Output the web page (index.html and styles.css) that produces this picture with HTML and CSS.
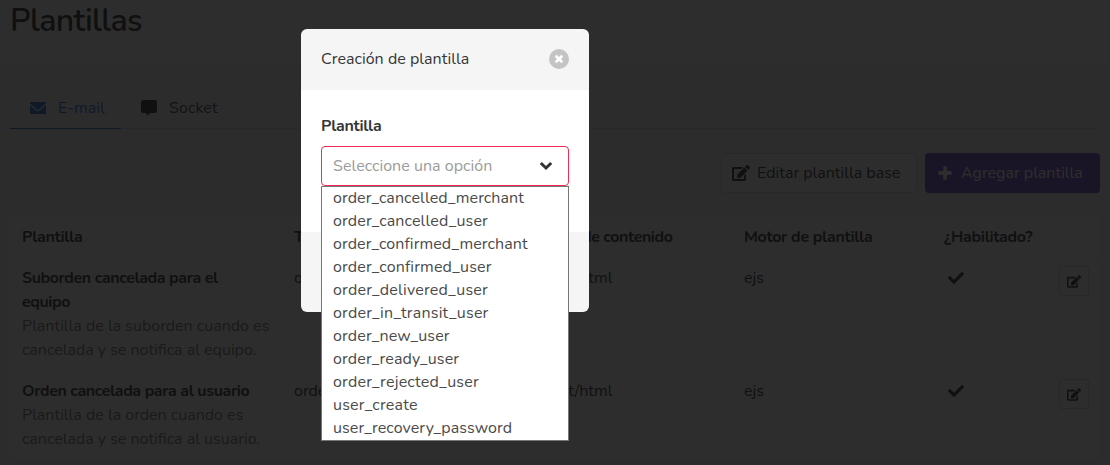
FILE: index.html
```html
<!DOCTYPE html>
<html lang="es">
<head>
<meta charset="utf-8">
<title>Plantillas</title>
<link rel="stylesheet" href="styles.css">
</head>
<body>
<svg class="sprite" aria-hidden="true">
  <symbol id="edit" viewBox="0 0 576 512"><path fill="currentColor" d="M402.6 83.2l90.2 90.2c3.8 3.8 3.8 10 0 13.8L274.4 405.6l-92.8 10.3c-12.4 1.4-22.9-9.1-21.5-21.5l10.3-92.8L388.8 83.2c3.8-3.8 10-3.8 13.8 0zm162-22.9l-48.8-48.8c-15.2-15.2-39.9-15.2-55.2 0l-35.4 35.4c-3.8 3.8-3.8 10 0 13.8l90.2 90.2c3.8 3.8 10 3.8 13.8 0l35.4-35.4c15.2-15.3 15.2-40 0-55.2zM384 346.2V448H64V128h229.8c3.2 0 6.2-1.3 8.5-3.5l40-40c7.6-7.6 2.2-20.5-8.5-20.5H48C21.5 64 0 85.5 0 112v352c0 26.5 21.5 48 48 48h352c26.5 0 48-21.5 48-48V306.2c0-10.7-12.9-16-20.5-8.5l-40 40c-2.2 2.3-3.5 5.3-3.5 8.5z"/></symbol>
  <symbol id="check" viewBox="0 0 512 512"><path fill="currentColor" d="M173.9 439.4L7.5 273c-10-10-10-26.2 0-36.2l36.2-36.2c10-10 26.2-10 36.2 0L192 312.7 432.1 72.6c10-10 26.2-10 36.2 0l36.2 36.2c10 10 10 26.2 0 36.2L210.1 439.4c-10 10-26.2 10-36.2 0z"/></symbol>
</svg>
<main class="page">
  <header class="hero"><h1 class="title">Plantillas</h1></header>
  <nav class="tabs">
    <a class="tab tab-active"><svg class="tab-icon" viewBox="0 0 16 12"><path fill="currentColor" d="M0 0h16v1.5L9.5 7.3q-1.500 1.200-3 0L0 1.500zM0 3l5.800 5.200q2.200 1.700 4.400 0L16 3v9H0z"/></svg><span>E-mail</span></a>
    <a class="tab"><svg class="tab-icon" viewBox="0 0 16 16"><path fill="currentColor" d="M2 0h12q2 0 2 2v9q0 2-2 2H9.500L5.500 16v-3H2q-2 0-2-2V2q0-2 2-2z"/></svg><span class="t-socket">Socket</span></a>
  </nav>
  <div class="actions">
    <button class="button"><svg class="edit-icon"><use href="#edit"/></svg><span>Editar plantilla base</span></button>
    <button class="button button-primary"><svg class="plus-icon" viewBox="0 0 14 14"><path d="M7 2v10M2 7h10" stroke="currentColor" stroke-width="3.8" stroke-linecap="round"/></svg><span>Agregar plantilla</span></button>
  </div>
  <section class="table">
    <div class="row head"><span>Plantilla</span><span>Tipo</span><span class="content-type">Tipo de contenido</span><span>Motor de plantilla</span><span>¿Habilitado?</span></div>
    <div class="row">
      <div><strong class="name">Suborden cancelada para el<br>equipo</strong><p class="desc">Plantilla de la suborden cuando es<br>cancelada y se notifica al equipo.</p></div>
      <span>order_cancelled_merchant</span><span>text/html</span><span>ejs</span><svg class="check"><use href="#check"/></svg><button class="small-button"><svg><use href="#edit"/></svg></button>
    </div>
    <div class="row">
      <div><strong class="name">Orden cancelada para al usuario</strong><p class="desc">Plantilla de la orden cuando es<br>cancelada y se notifica al usuario.</p></div>
      <span>order_cancelled_user</span><span>text/html</span><span>ejs</span><svg class="check"><use href="#check"/></svg><button class="small-button"><svg><use href="#edit"/></svg></button>
    </div>
  </section>
</main>
<div class="overlay">
  <section class="modal">
    <header class="modal-head"><span>Creación de plantilla</span><button class="close"><svg viewBox="0 0 20 20"><path d="M6.700 6.700l6.600 6.600M13.300 6.700l-6.600 6.600" stroke="#fff" stroke-width="2.700"/></svg></button></header>
    <div class="modal-body">
      <label class="field-label">Plantilla</label>
      <div class="select"><span class="placeholder">Seleccione una opción</span><svg class="chevron" viewBox="0 0 14 10"><path d="M1.800 2l5.200 5 5.200-5" fill="none" stroke="#333" stroke-width="3"/></svg>
        <ul class="options">
          <li class="merchant">order_cancelled_merchant</li><li>order_cancelled_user</li><li class="merchant">order_confirmed_merchant</li><li>order_confirmed_user</li><li class="wide">order_delivered_user</li><li class="wide">order_in_transit_user</li><li>order_new_user</li><li>order_ready_user</li><li class="wide">order_rejected_user</li><li class="wide">user_create</li><li class="merchant">user_recovery_password</li>
        </ul>
      </div>
    </div>
    <footer class="modal-foot"></footer>
  </section>
</div>
</body>
</html>
```
FILE: styles.css
```css
* { box-sizing: border-box; margin: 0; padding: 0; }
body { height: 465px; overflow: hidden; background: #f9f9f9; color: #363636; font: 16px/24px Nunito, Lato, sans-serif; }
.sprite { display: none; }
svg { display: block; flex: none; }
button { font: inherit; color: inherit; }
.hero { height: 62px; padding: 2px 10px; background: #fff; }
.title { font-size: 32px; line-height: 38px; font-weight: 600; letter-spacing: -.6px; }
.tabs { display: flex; height: 67px; margin: 0 10px; padding-top: 24px; border-bottom: 1px solid #dbdbdb; }
.tab { display: flex; align-items: center; height: 43px; gap: 12px; padding: 0 16px 0 20px; color: #4a4a4a; }
.tab-active { width: 111px; padding-top: 1px; color: #3273dc; border-bottom: 1px solid #3273dc; }
.tab-icon { width: 16px; height: 16px; color: #363636; }
.tab-active .tab-icon { color: #3273dc; }
.t-socket { letter-spacing: .1px; }
.actions { display: flex; justify-content: flex-end; gap: 8px; padding: 24px 10px 23px; }
.button { display: flex; align-items: center; width: 196px; height: 40px; padding: 0 10px; gap: 7px; background: #fff; border: 1px solid #dbdbdb; border-radius: 4px; white-space: nowrap; }
.button-primary { width: 175px; padding: 0 13px; gap: 9px; border: 0; background: #7551cb; color: #fff; }
.edit-icon { width: 18px; height: 16px; }
.plus-icon { width: 14px; height: 14px; }
.table { margin: 0 10px; background: #fff; white-space: nowrap; }
.row { display: grid; grid-template-columns: 272px 252px 198px 200px 115px 30px; padding: 8px 11px 8px 12px; border-bottom: 1px solid #f6f6f6; align-items: start; }
.head { padding-top: 9px; font-weight: 700; letter-spacing: -.3px; }
.content-type { letter-spacing: -.42px; }
.name { font-weight: 700; letter-spacing: -.39px; }
.desc { color: #7a7a7a; }
.check { width: 16px; height: 16px; margin: 4px 0 0 4px; }
.small-button { display: grid; place-items: center; width: 30px; height: 30px; background: #fff; border: 1px solid #dbdbdb; border-radius: 2px; }
.small-button svg { width: 14px; height: 13px; }
.overlay { position: absolute; inset: 0; display: flex; justify-content: center; align-items: flex-start; padding: 29px 220px 0 0; background: rgba(10, 10, 10, .86); }
.modal { width: 288px; }
.modal-head { display: flex; align-items: center; justify-content: space-between; height: 61px; padding: 0 20px 1px; background: #f5f5f5; border-radius: 6px 6px 0 0; letter-spacing: .03px; }
.close { width: 20px; height: 20px; border: 0; border-radius: 50%; background: #c4c4c4; }
.modal-body { height: 142px; padding: 24px 20px; background: #fff; }
.field-label { display: block; font-weight: 700; letter-spacing: -.3px; margin-bottom: 8px; }
.select { position: relative; display: flex; align-items: center; justify-content: space-between; height: 40px; padding: 0 15px 0 11px; border: 1px solid #f12b56; border-radius: 4px; color: #9b9b9b; }
.placeholder { letter-spacing: .04px; }
.chevron { width: 14px; height: 10px; }
.options { position: absolute; top: 39px; left: -1px; width: 248px; height: 255px; border: 1px solid #767676; background: #fff; color: #4a4a4a; list-style: none; letter-spacing: .14px; }
.options li { height: 23px; line-height: 23px; padding-left: 11px; }
.options .merchant { letter-spacing: .09px; }
.options .wide { letter-spacing: .22px; }
.modal-foot { height: 80px; background: #f5f5f5; border-radius: 0 0 6px 6px; }
```
